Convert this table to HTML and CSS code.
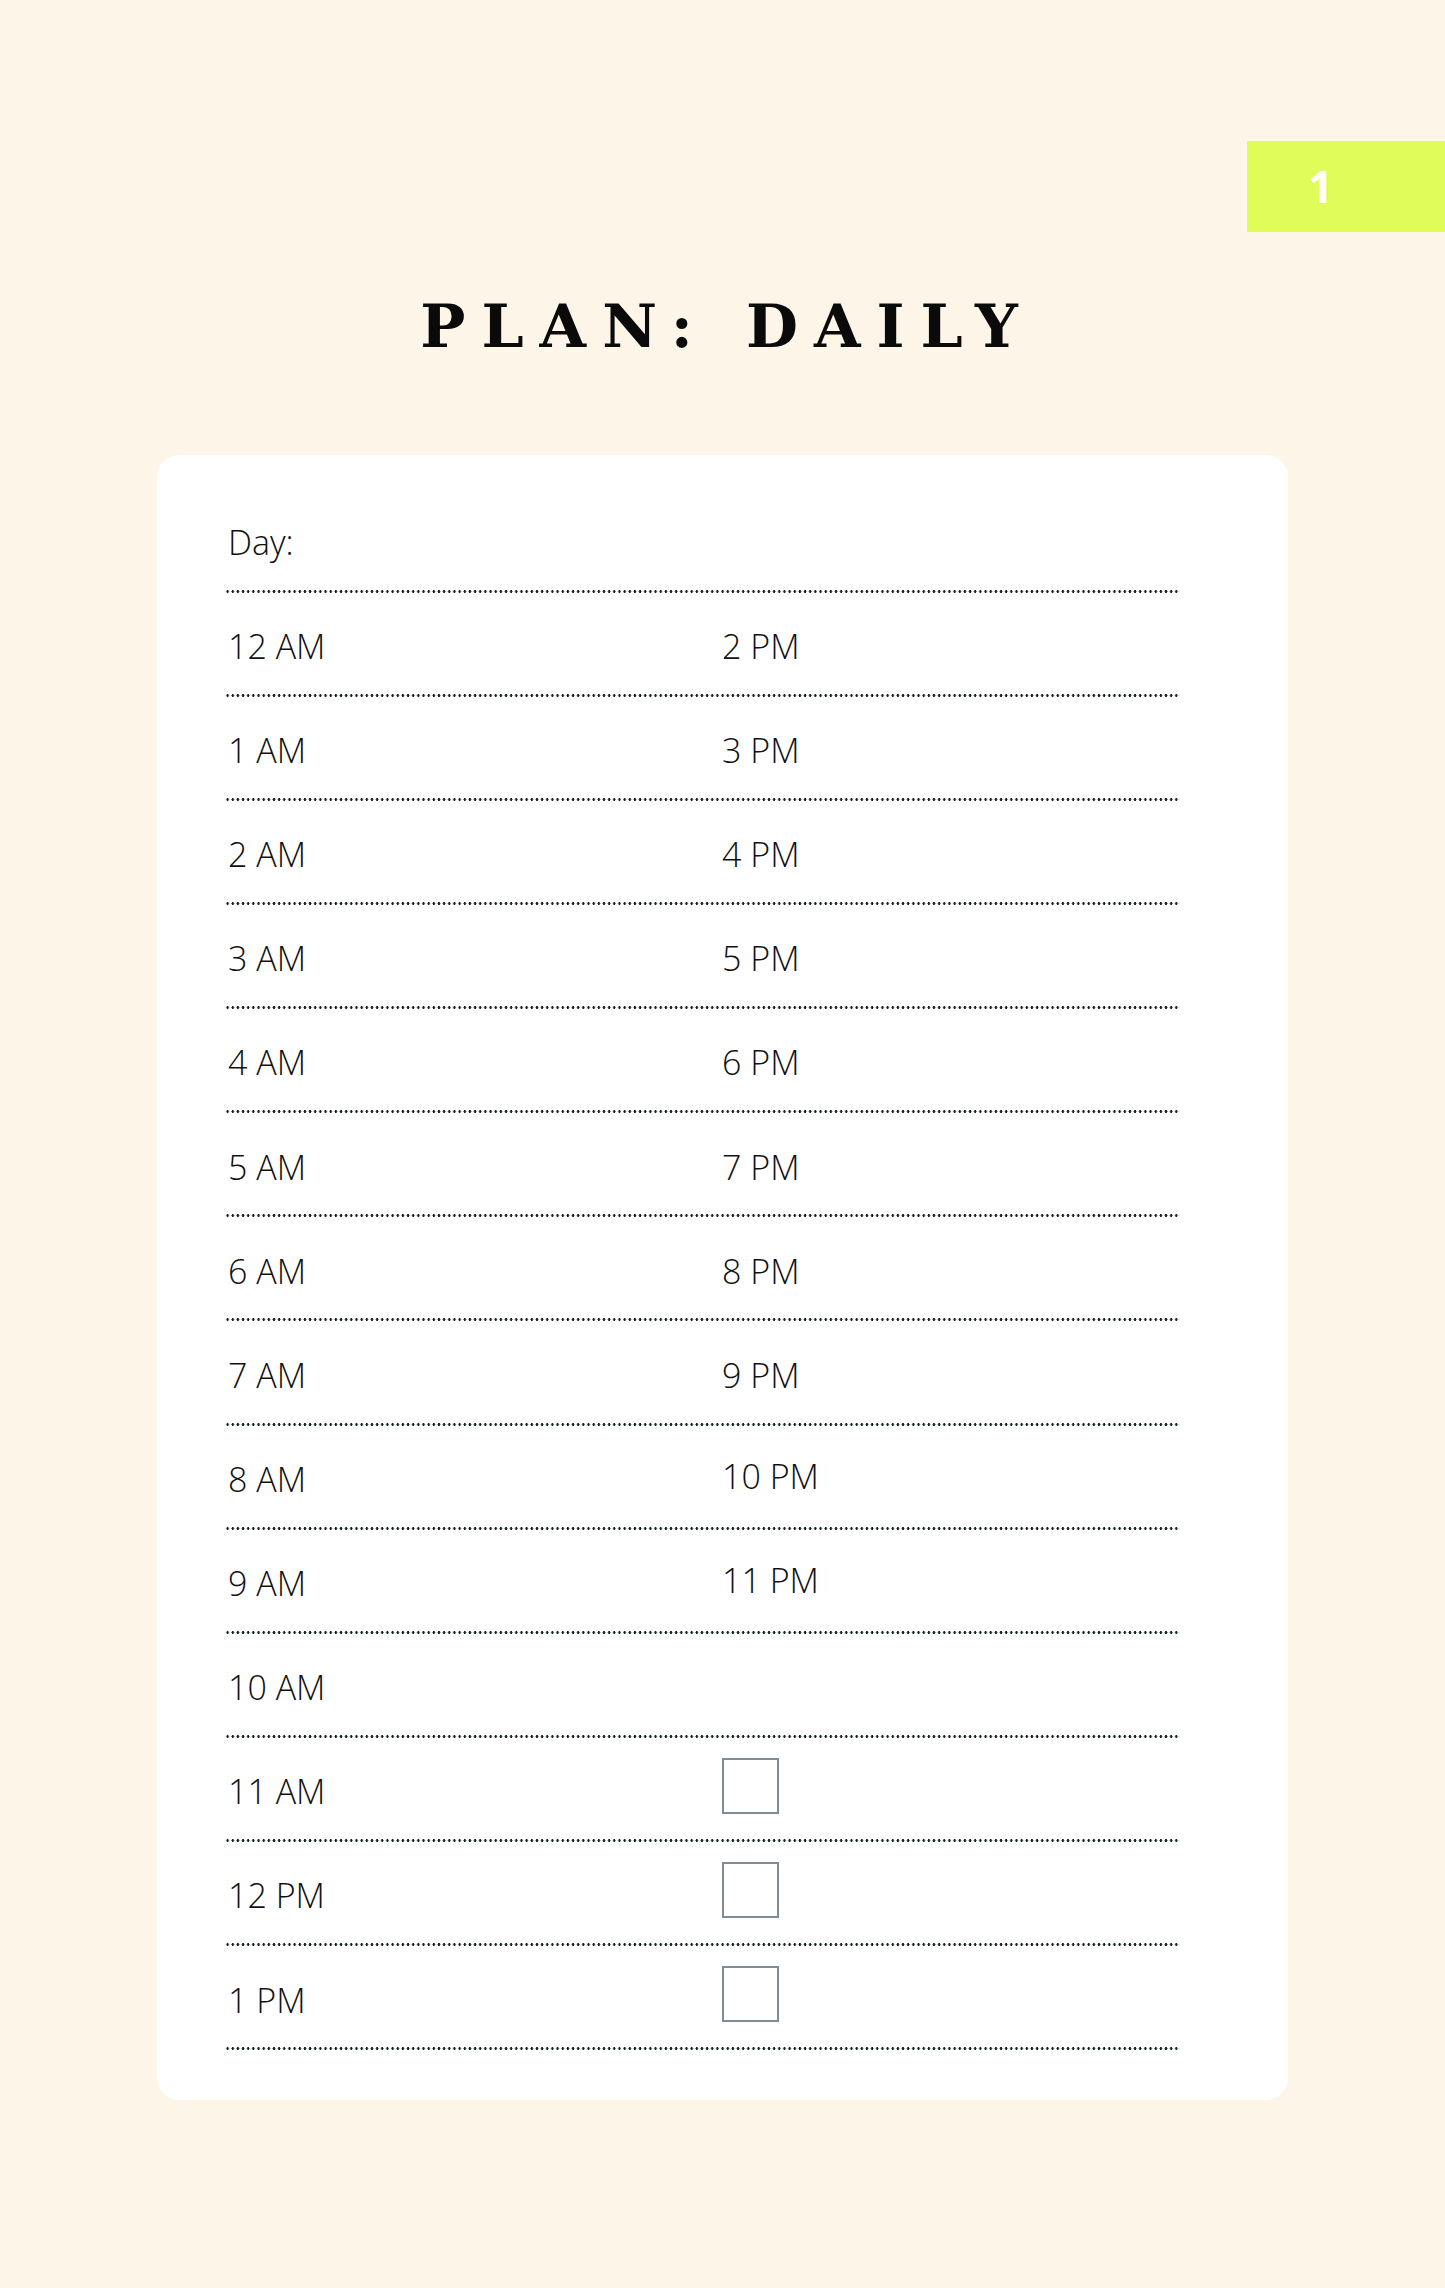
FILE: index.html
```html
<!DOCTYPE html>
<html lang="en">
<head>
<meta charset="utf-8">
<title>Plan: Daily</title>
<link rel="stylesheet" href="styles.css">
</head>
<body>
<div class="page">
  <div class="tab-row"><div class="tab">1</div></div>
  <h1 class="title">PLAN: DAILY</h1>
  <div class="card">
    <div class="row"><span class="label">Day:</span></div>
    <div class="row"><span class="label">12 AM</span><span class="label">2 PM</span></div>
    <div class="row"><span class="label">1 AM</span><span class="label">3 PM</span></div>
    <div class="row"><span class="label">2 AM</span><span class="label">4 PM</span></div>
    <div class="row"><span class="label">3 AM</span><span class="label">5 PM</span></div>
    <div class="row"><span class="label">4 AM</span><span class="label">6 PM</span></div>
    <div class="row"><span class="label">5 AM</span><span class="label">7 PM</span></div>
    <div class="row"><span class="label">6 AM</span><span class="label">8 PM</span></div>
    <div class="row"><span class="label">7 AM</span><span class="label">9 PM</span></div>
    <div class="row"><span class="label">8 AM</span><span class="label up">10 PM</span></div>
    <div class="row"><span class="label">9 AM</span><span class="label up">11 PM</span></div>
    <div class="row"><span class="label">10 AM</span></div>
    <div class="row"><span class="label">11 AM</span><span class="check"></span></div>
    <div class="row"><span class="label">12 PM</span><span class="check"></span></div>
    <div class="row"><span class="label">1 PM</span><span class="check"></span></div>
  </div>
</div>
</body>
</html>
```

FILE: styles.css
```css
* { box-sizing: border-box; }
html, body { margin: 0; padding: 0; }
body {
  background: #fdf5e8;
  width: 1445px;
  height: 2288px;
  overflow: hidden;
}
.page {
  display: flex;
  flex-direction: column;
}
.tab-row {
  display: flex;
  justify-content: flex-end;
  margin-top: 141px;
}
.tab {
  width: 198px;
  height: 91px;
  background: #e0fc58;
  color: #ffffff;
  font-family: "Open Sans", "Liberation Sans", sans-serif;
  font-weight: 700;
  font-size: 44px;
  line-height: 91px;
  padding-left: 61px;
}
.title {
  margin: 64px 0 0 0;
  height: 60px;
  font-family: "DejaVu Serif", "Liberation Serif", serif;
  font-weight: 700;
  font-size: 60px;
  line-height: 60px;
  letter-spacing: 16px;
  text-align: center;
  padding-left: 9px;
  color: #0a0a0a;
}
.card {
  margin: 99px 0 0 157px;
  width: 1131px;
  height: 1645px;
  background: #ffffff;
  border-radius: 22px;
  padding: 33.4px 0 0 68px;
}
.row {
  width: 955px;
  height: 104.14px;
  display: grid;
  grid-template-columns: 494px 1fr;
  align-items: end;
  background-image: radial-gradient(circle at center, #13241f 0, #13241f 1.1px, rgba(19,36,31,0) 1.5px);
  background-size: 5.16px 3px;
  background-repeat: repeat-x;
  background-position: left bottom;
}
.label {
  font-family: "Open Sans", "Liberation Sans", sans-serif;
  font-weight: 300;
  font-size: 34px;
  line-height: 34px;
  color: #111111;
  padding-bottom: 33.7px;
  padding-left: 3px;
}
.label.up { padding-bottom: 36.7px; }
.check {
  width: 57px;
  height: 56px;
  margin-left: 3px;
  border: 2.5px solid #7f8c95;
  margin-bottom: 28.5px;
}
```
